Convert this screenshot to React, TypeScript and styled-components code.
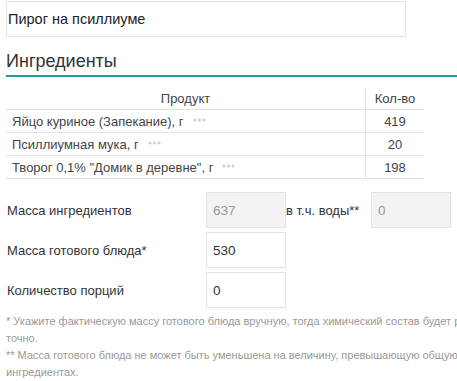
import React from "react";
import styled, { createGlobalStyle } from "styled-components";

const Global = createGlobalStyle`
  html, body {
    margin: 0;
    padding: 0;
    overflow: hidden;
    background: #fff;
  }
  body {
    font-family: "Liberation Sans", Arial, sans-serif;
    color: #333;
  }
`;

const Page = styled.div`
  width: 560px;
  padding: 1px 0 0 6px;
`;

const TitleInput = styled.input`
  box-sizing: border-box;
  display: block;
  width: 400px;
  height: 36px;
  border: 1px solid #e3e3e3;
  padding: 0 0 1px 1px;
  font-family: inherit;
  font-size: 14.5px;
  color: #222;
  outline: none;
`;

const Heading = styled.h2`
  margin: 13px 0 0;
  padding-bottom: 3px;
  font-size: 18px;
  font-weight: 400;
  color: #333;
  line-height: 22px;
  border-bottom: 2px solid #1b9eae;
`;

const Table = styled.table`
  margin-top: 11px;
  width: 418px;
  border-collapse: collapse;
  font-size: 13px;
`;

const Th = styled.th<{ $narrow?: boolean }>`
  height: 21px;
  padding: 0;
  font-weight: 400;
  color: #444;
  text-align: center;
  width: ${(p) => (p.$narrow ? "58px" : "auto")};
  border-bottom: 1px solid #e3e3e3;
  border-left: ${(p) => (p.$narrow ? "1px solid #e3e3e3" : "none")};
`;

const Td = styled.td<{ $num?: boolean }>`
  height: 22px;
  padding: 0 0 0 ${(p) => (p.$num ? "0" : "6px")};
  color: #444;
  text-align: ${(p) => (p.$num ? "center" : "left")};
  border-bottom: 1px solid #e3e3e3;
  border-left: ${(p) => (p.$num ? "1px solid #e3e3e3" : "none")};
`;

const Dots = styled.svg`
  margin-left: 9px;
  vertical-align: middle;
  position: relative;
  top: -2px;
`;

const Form = styled.div`
  margin-top: 13px;
  display: flex;
  flex-direction: column;
  gap: 4px;
`;

const Row = styled.div`
  display: flex;
  align-items: center;
  height: 36px;
`;

const Label = styled.span<{ $w?: number }>`
  font-size: 13px;
  color: #333;
  padding-left: 1px;
  width: ${(p) => (p.$w ? `${p.$w}px` : "auto")};
  flex: none;
`;

const SideLabel = styled.span`
  font-size: 13px;
  color: #333;
  width: 85px;
  flex: none;
`;

const NumInput = styled.input`
  box-sizing: border-box;
  width: 80px;
  height: 36px;
  border: 1px solid #e3e3e3;
  padding: 0 0 0 6px;
  font-family: inherit;
  font-size: 13.5px;
  color: #333;
  background: #fff;
  outline: none;
  flex: none;

  &:disabled {
    background: #f3f3f3;
    color: #999;
  }
`;

const Notes = styled.div`
  margin-top: 5px;
  font-size: 11px;
  line-height: 17px;
  color: #999;
`;

const DotsIcon = () => (
  <Dots width="13" height="4" viewBox="0 0 13 4">
    <circle cx="2" cy="2" r="1.6" fill="#c9cfdb" />
    <circle cx="6.5" cy="2" r="1.6" fill="#c9cfdb" />
    <circle cx="11" cy="2" r="1.6" fill="#c9cfdb" />
  </Dots>
);

const ingredients = [
  { name: "Яйцо куриное (Запекание), г", qty: 419 },
  { name: "Псиллиумная мука, г", qty: 20 },
  { name: 'Творог 0,1% "Домик в деревне", г', qty: 198 },
];

const App = () => {
  return (
    <Page>
      <Global />
      <TitleInput defaultValue="Пирог на псиллиуме" />
      <Heading>Ингредиенты</Heading>
      <Table>
        <thead>
          <tr>
            <Th>Продукт</Th>
            <Th $narrow>Кол-во</Th>
          </tr>
        </thead>
        <tbody>
          {ingredients.map((item) => (
            <tr key={item.name}>
              <Td>
                {item.name}
                <DotsIcon />
              </Td>
              <Td $num>{item.qty}</Td>
            </tr>
          ))}
        </tbody>
      </Table>
      <Form>
        <Row>
          <Label $w={199}>Масса ингредиентов</Label>
          <NumInput disabled value="637" readOnly />
          <SideLabel>в т.ч. воды**</SideLabel>
          <NumInput disabled value="0" readOnly />
        </Row>
        <Row>
          <Label $w={199}>Масса готового блюда*</Label>
          <NumInput defaultValue="530" />
        </Row>
        <Row>
          <Label $w={199}>Количество порций</Label>
          <NumInput defaultValue="0" />
        </Row>
      </Form>
      <Notes>
        * Укажите фактическую массу готового блюда вручную, тогда химический
        состав будет рассчитан более точно.
        <br />
        ** Масса готового блюда не может быть уменьшена на величину,
        превышающую общую массу воды в ингредиентах.
      </Notes>
    </Page>
  );
};

export default App;
